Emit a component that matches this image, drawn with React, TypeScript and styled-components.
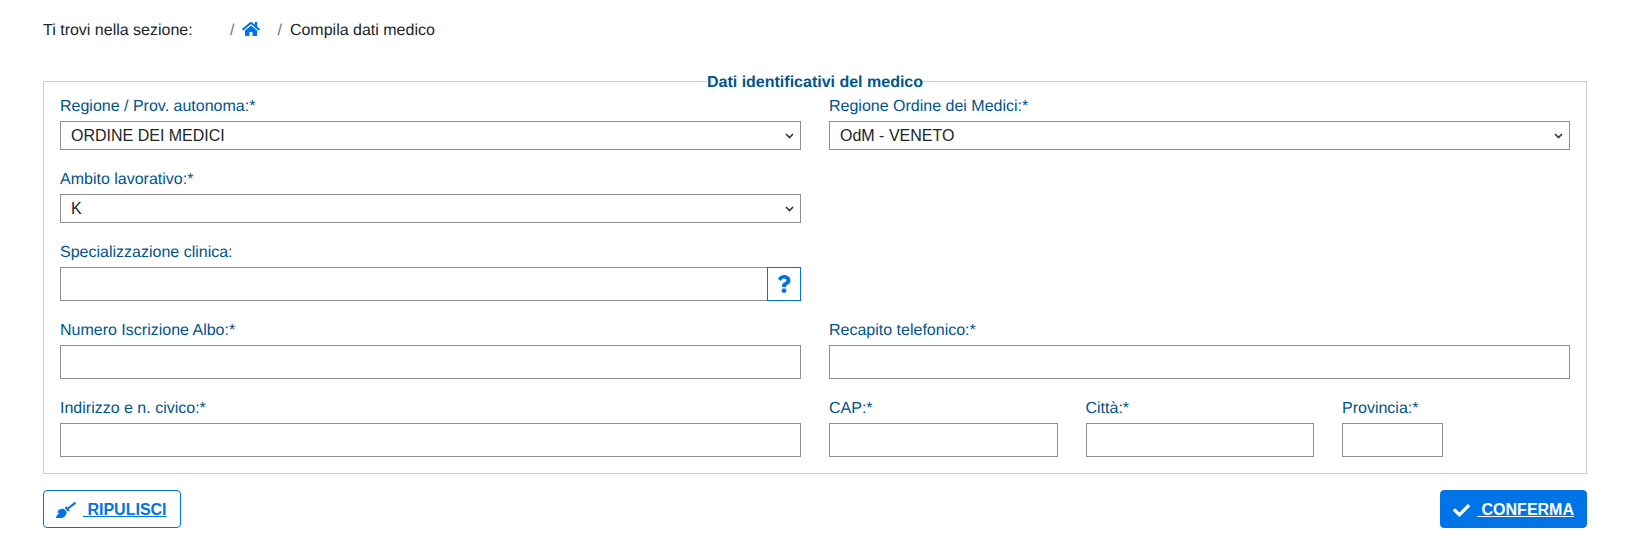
import React from "react";
import styled, { createGlobalStyle } from "styled-components";
import { FaHome, FaBroom, FaCheck, FaQuestion } from "react-icons/fa";

const GlobalStyle = createGlobalStyle`
  * {
    box-sizing: border-box;
  }
  body {
    margin: 0;
    background: #fff;
    color: #212529;
    font-family: "Liberation Sans", Arial, sans-serif;
    font-size: 16px;
    line-height: 24px;
    text-rendering: geometricPrecision;
  }
`;

function App() {
  return (
    <Page>
      <GlobalStyle />
      <Breadcrumb>
        <CrumbTitle>Ti trovi nella sezione:</CrumbTitle>
        <Slash>/</Slash>
        <HomeLink href="#">
          <FaHome />
        </HomeLink>
        <Slash>/</Slash>
        <span>Compila dati medico</span>
      </Breadcrumb>

      <FormBox>
        <Legend>Dati identificativi del medico</Legend>
        <Row>
          <Field>
            <Label>Regione / Prov. autonoma:*</Label>
            <Select defaultValue="ORDINE DEI MEDICI">
              <option>ORDINE DEI MEDICI</option>
            </Select>
          </Field>
          <Field>
            <Label>Regione Ordine dei Medici:*</Label>
            <Select defaultValue="OdM - VENETO">
              <option>OdM - VENETO</option>
            </Select>
          </Field>
        </Row>
        <Row>
          <Field>
            <Label>Ambito lavorativo:*</Label>
            <Select defaultValue="K">
              <option>K</option>
            </Select>
          </Field>
        </Row>
        <Row>
          <Field>
            <Label>Specializzazione clinica:</Label>
            <InputGroup>
              <GroupInput />
              <HelpButton type="button">
                <FaQuestion />
              </HelpButton>
            </InputGroup>
          </Field>
        </Row>
        <Row>
          <Field>
            <Label>Numero Iscrizione Albo:*</Label>
            <Input />
          </Field>
          <Field>
            <Label>Recapito telefonico:*</Label>
            <Input />
          </Field>
        </Row>
        <Row>
          <Field>
            <Label>Indirizzo e n. civico:*</Label>
            <Input />
          </Field>
          <AddressGrid>
            <div>
              <Label>CAP:*</Label>
              <Input />
            </div>
            <div>
              <Label>Città:*</Label>
              <Input />
            </div>
            <div>
              <Label>Provincia:*</Label>
              <Input />
            </div>
          </AddressGrid>
        </Row>
      </FormBox>

      <Actions>
        <Button type="button">
          <BroomIcon />
          <u>&nbsp;RIPULISCI</u>
        </Button>
        <Button type="button" $primary>
          <CheckIcon />
          <u>&nbsp;CONFERMA</u>
        </Button>
      </Actions>
    </Page>
  );
}

export default App;

const Page = styled.div`
  padding: 19px 55px 0 43px;
`;
const Breadcrumb = styled.nav`
  display: flex;
  align-items: center;
  height: 24px;
`;
const CrumbTitle = styled.span`
  width: 187px;
`;
const Slash = styled.span`
  color: #6c757d;
  margin-right: 8px;
`;
const HomeLink = styled.a`
  display: flex;
  width: 35px;
  padding-bottom: 4px;
  color: #0073e6;
  font-size: 18px;
`;
const FormBox = styled.fieldset`
  margin: 26px 0 0;
  padding: 1px 16px 16px;
  min-width: 0;
  border: 1px solid #ccc;
`;
const Legend = styled.legend`
  position: relative;
  top: 2px;
  margin: 0 auto;
  padding: 0;
  color: #00558b;
  font-weight: 700;
`;
const Row = styled.div`
  display: grid;
  grid-template-columns: 1fr 1fr;
  column-gap: 28px;
  margin-bottom: 17px;
  &:last-child {
    margin-bottom: 0;
  }
`;
const Field = styled.div`
  min-width: 0;
`;
const Label = styled.label`
  display: block;
  margin-bottom: 2px;
  padding-top: 1px;
  color: #00558b;
`;
const Select = styled.select`
  display: block;
  width: 100%;
  height: 29px;
  padding: 0 24px 0 10px;
  border: 1px solid #8f8f8f;
  border-radius: 0;
  appearance: none;
  background: #fff
    url("data:image/svg+xml,%3Csvg xmlns='http://www.w3.org/2000/svg' viewBox='0 0 9 6'%3E%3Cpath d='M1 1l3.5 3.5L8 1' fill='none' stroke='%23333' stroke-width='1.6'/%3E%3C/svg%3E")
    no-repeat right 6px center / 9px 6px;
  color: #212529;
  font-family: inherit;
  font-size: 16px;
`;
const Input = styled.input`
  display: block;
  width: 100%;
  height: 34px;
  padding: 0 10px;
  border: 1px solid #8f8f8f;
  border-radius: 0;
  font-family: inherit;
  font-size: 16px;
`;
const InputGroup = styled.div`
  display: flex;
`;
const GroupInput = styled(Input)`
  flex: 1;
  border-right: 0;
`;
const HelpButton = styled.button`
  display: flex;
  align-items: center;
  justify-content: center;
  width: 34px;
  height: 34px;
  padding: 0;
  border: 1px solid #0073e6;
  background: #fff;
  color: #0073e6;
  font-size: 18px;
`;
const AddressGrid = styled.div`
  display: grid;
  grid-template-columns: 228.5px 228.5px 100.5px;
  column-gap: 28px;
`;
const Actions = styled.div`
  display: flex;
  justify-content: space-between;
  margin-top: 16px;
`;
const Button = styled.button<{ $primary?: boolean }>`
  display: flex;
  align-items: center;
  gap: 7px;
  height: 38px;
  padding: 2px ${(p) => (p.$primary ? "12px" : "13px")} 0 12px;
  border: 1px solid #0073e6;
  border-radius: 4px;
  background: ${(p) => (p.$primary ? "#0073e6" : "#fff")};
  color: ${(p) => (p.$primary ? "#fff" : "#0073e6")};
  font-family: inherit;
  font-size: 16px;
  font-weight: 700;
`;
const BroomIcon = styled(FaBroom)`
  font-size: 20px;
`;
const CheckIcon = styled(FaCheck)`
  font-size: 17px;
`;
